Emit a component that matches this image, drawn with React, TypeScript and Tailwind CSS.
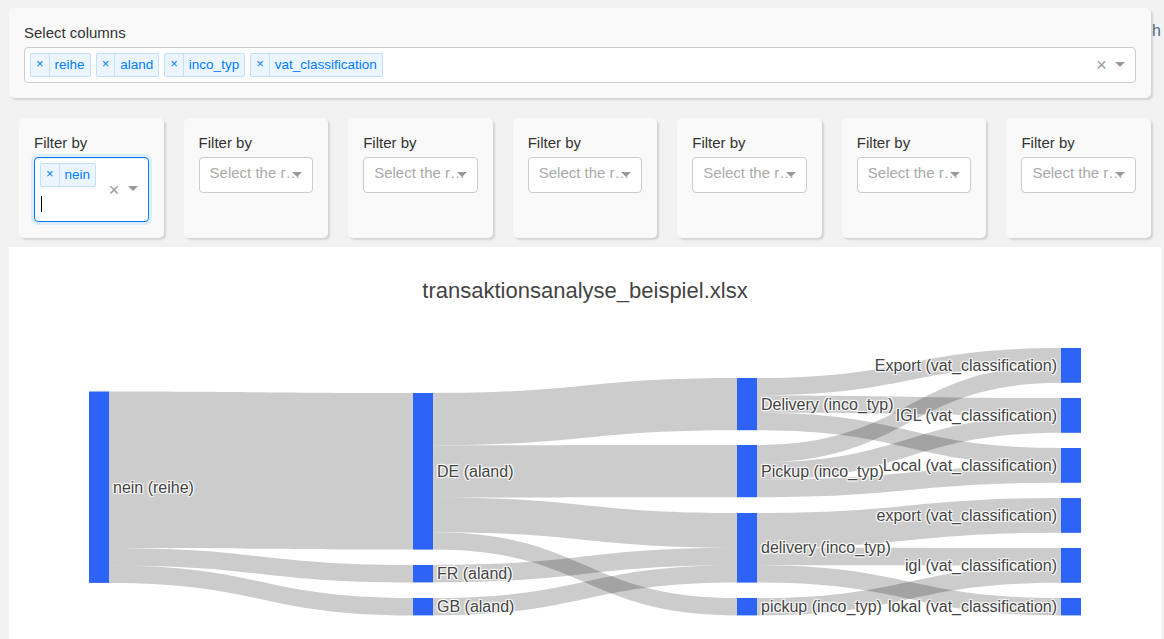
import React from "react";

const U = 17.4;
const COLS = [89, 413, 737, 1061];
const NODE_W = 20;

type Node = { id: string; label: string; col: number; y: number; v: number };

const nodes: Node[] = [
  { id: "nein", label: "nein (reihe)", col: 0, y: 391.5, v: 11 },
  { id: "DE", label: "DE (aland)", col: 1, y: 393, v: 9 },
  { id: "FR", label: "FR (aland)", col: 1, y: 565, v: 1 },
  { id: "GB", label: "GB (aland)", col: 1, y: 598, v: 1 },
  { id: "Delivery", label: "Delivery (inco_typ)", col: 2, y: 378, v: 3 },
  { id: "Pickup", label: "Pickup (inco_typ)", col: 2, y: 445, v: 3 },
  { id: "delivery", label: "delivery (inco_typ)", col: 2, y: 513, v: 4 },
  { id: "pickup", label: "pickup (inco_typ)", col: 2, y: 598, v: 1 },
  { id: "Export", label: "Export (vat_classification)", col: 3, y: 348, v: 2 },
  { id: "IGL", label: "IGL (vat_classification)", col: 3, y: 398, v: 2 },
  { id: "Local", label: "Local (vat_classification)", col: 3, y: 448, v: 2 },
  { id: "export", label: "export (vat_classification)", col: 3, y: 498, v: 2 },
  { id: "igl", label: "igl (vat_classification)", col: 3, y: 548, v: 2 },
  { id: "lokal", label: "lokal (vat_classification)", col: 3, y: 598, v: 1 },
];

const links: [string, string, number][] = [
  ["nein", "DE", 9],
  ["nein", "FR", 1],
  ["nein", "GB", 1],
  ["DE", "Delivery", 3],
  ["DE", "Pickup", 3],
  ["DE", "delivery", 2],
  ["DE", "pickup", 1],
  ["FR", "delivery", 1],
  ["GB", "delivery", 1],
  ["Delivery", "Export", 1],
  ["Delivery", "IGL", 1],
  ["Delivery", "Local", 1],
  ["Pickup", "Export", 1],
  ["Pickup", "IGL", 1],
  ["Pickup", "Local", 1],
  ["delivery", "export", 2],
  ["delivery", "igl", 1],
  ["delivery", "lokal", 1],
  ["pickup", "igl", 1],
];

const columns = ["reihe", "aland", "inco_typ", "vat_classification"];

function linkPaths() {
  const byId: Record<string, Node> = {};
  nodes.forEach((n) => (byId[n.id] = n));
  const outOff: Record<string, number> = {};
  const inOff: Record<string, number> = {};
  return links.map(([s, t, v]) => {
    const a = byId[s];
    const b = byId[t];
    const s0 = a.y + (outOff[s] || 0);
    const t0 = b.y + (inOff[t] || 0);
    outOff[s] = (outOff[s] || 0) + v * U;
    inOff[t] = (inOff[t] || 0) + v * U;
    const s1 = s0 + v * U;
    const t1 = t0 + v * U;
    const x0 = COLS[a.col] + NODE_W;
    const x1 = COLS[b.col];
    const xm = (x0 + x1) / 2;
    return `M${x0},${s0} C${xm},${s0} ${xm},${t0} ${x1},${t0} L${x1},${t1} C${xm},${t1} ${xm},${s1} ${x0},${s1} Z`;
  });
}

const Arrow = () => (
  <span className="block w-0 h-0 border-solid border-t-[5px] border-x-[5px] border-b-[2.5px] border-x-transparent border-b-transparent border-t-[#999]" />
);

const Tag = ({ label }: { label: string }) => (
  <span className="inline-flex ml-[5px] mt-[5px] rounded-[2px] border border-[#c2e0ff] bg-[#ebf5ff] text-[13.5px] leading-[18px] text-[#007eff]">
    <span className="border-r border-[#c2e0ff] px-[5px] pt-[1px] pb-[3px] text-[13px]">×</span>
    <span className="px-[5px] py-[2px]">{label}</span>
  </span>
);

const FilterCard = ({ active }: { active?: boolean }) => (
  <div className="h-[120px] rounded-[5px] bg-[#f9f9f9] px-[15px] pt-[14px] shadow-[2px_2px_2px_#d3d3d3]">
    <div className="text-[15px] leading-[21px] text-[#333] mb-1">Filter by</div>
    {active ? (
      <div className="flex rounded-[4px] border border-[#007eff] bg-white shadow-[inset_0_1px_1px_rgba(0,0,0,0.075),0_0_0_3px_rgba(0,126,255,0.1)]">
        <div className="flex flex-1 flex-wrap">
          <Tag label="nein" />
          <div className="w-full h-[34px] flex items-center pl-[6px]">
            <span className="block w-px h-[16px] bg-black" />
          </div>
        </div>
        <span className="w-[17px] flex items-center justify-center text-[18px] leading-none text-[#999]">×</span>
        <span className="w-[25px] pr-[5px] flex items-center justify-center">
          <Arrow />
        </span>
      </div>
    ) : (
      <div className="relative h-[36px] rounded-[4px] border border-[#ccc] bg-white">
        <div className="px-[10px] leading-[29px] text-[15px] text-[#aaa] truncate">Select the row values</div>
        <span className="absolute right-0 top-0 bottom-0 w-[25px] pr-[5px] flex items-center justify-center">
          <Arrow />
        </span>
      </div>
    )}
  </div>
);

export default function App() {
  const paths = linkPaths();
  return (
    <div className="min-h-screen bg-[#f2f2f2] pt-[8px] pl-[9px] font-['Liberation_Sans',Arial,sans-serif] overflow-hidden">
      <div className="flex items-start">
        <div className="w-[1142px] shrink-0 rounded-[5px] bg-[#f9f9f9] px-[15px] pt-[14px] pb-[15px] shadow-[2px_2px_2px_#d3d3d3]">
          <div className="text-[15px] leading-[21px] text-[#333] mb-1">Select columns</div>
          <div className="flex h-[36px] rounded-[4px] border border-[#ccc] bg-white">
            <div className="flex flex-1 items-start">
              {columns.map((c) => (
                <Tag key={c} label={c} />
              ))}
            </div>
            <span className="w-[17px] flex items-center justify-center text-[18px] leading-none text-[#999]">×</span>
            <span className="w-[25px] pr-[5px] flex items-center justify-center">
              <Arrow />
            </span>
          </div>
        </div>
        <span className="ml-px mt-[12px] text-[16px] leading-[21px] text-[#506784]">h</span>
      </div>

      <div className="grid grid-cols-7 gap-5 ml-[10px] w-[1132px] mt-5">
        {Array.from({ length: 7 }).map((_, i) => (
          <FilterCard key={i} active={i === 0} />
        ))}
      </div>

      <div className="mt-[9px] w-[1152px] h-[400px] bg-white">
        <div className="pt-[30px] text-center text-[22px] leading-[28px] text-[#444]">
          transaktionsanalyse_beispiel.xlsx
        </div>
        <svg width="1152" height="340" className="block">
          <g transform="translate(-9,-305)">
            {paths.map((d, i) => (
              <path key={i} d={d} fill="rgba(0,0,0,0.2)" />
            ))}
            {nodes.map((n) => (
              <rect key={n.id} x={COLS[n.col]} y={n.y} width={NODE_W} height={n.v * U} fill="#2d63f6" />
            ))}
            {nodes.map((n) => {
              const right = n.col === 3;
              return (
                <text
                  key={n.id + "l"}
                  x={right ? COLS[n.col] - 4 : COLS[n.col] + NODE_W + 4}
                  y={n.y + (n.v * U) / 2}
                  dy="0.35em"
                  textAnchor={right ? "end" : "start"}
                  fill="#444"
                  fontSize="16"
                  className="[text-shadow:1px_1px_1px_#fff,-1px_-1px_1px_#fff,1px_-1px_1px_#fff,-1px_1px_1px_#fff]"
                >
                  {n.label}
                </text>
              );
            })}
          </g>
        </svg>
      </div>
    </div>
  );
}
